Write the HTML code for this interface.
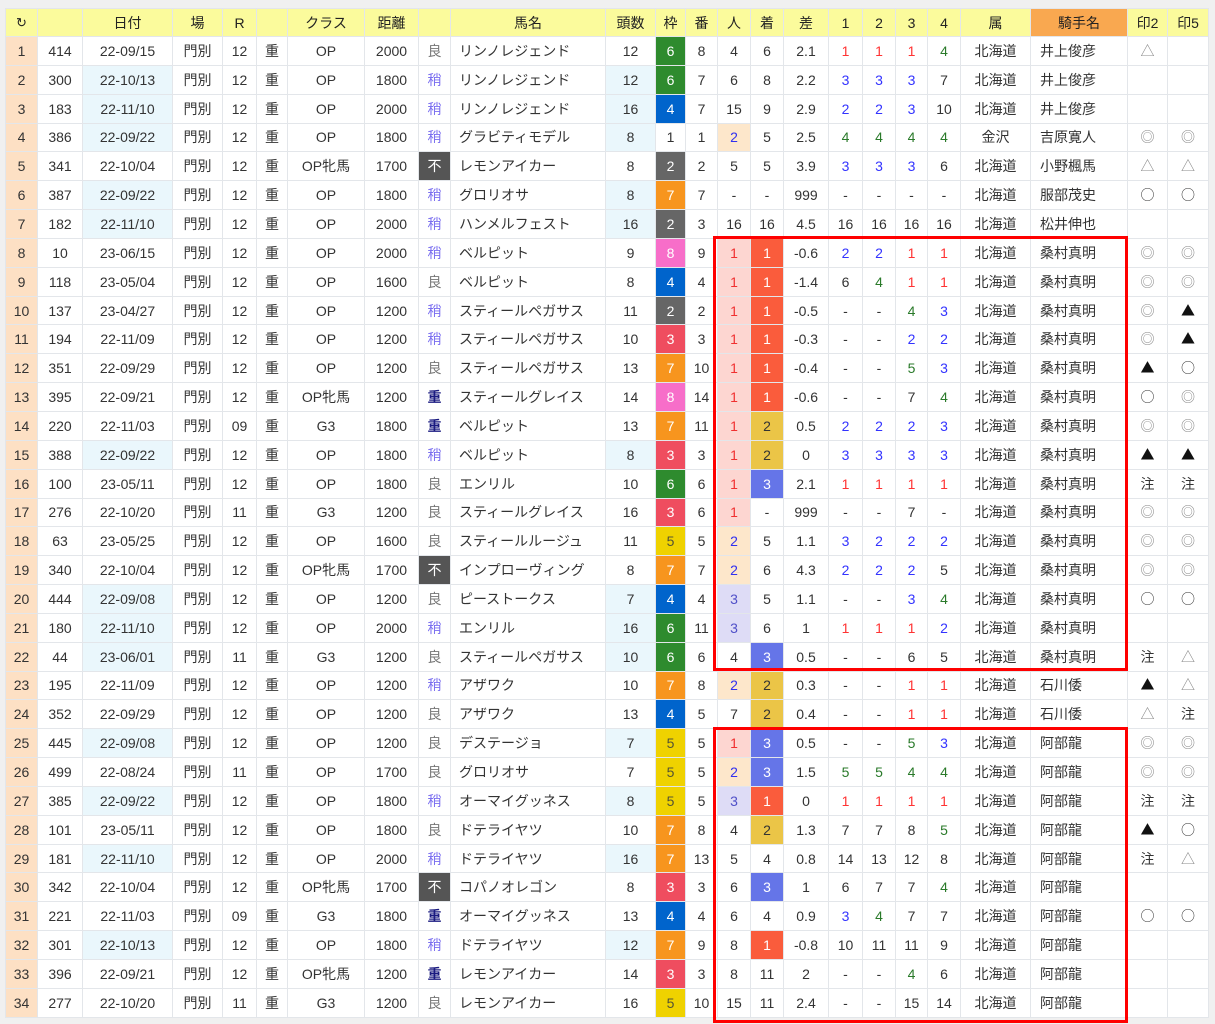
<!DOCTYPE html>
<html><head><meta charset="utf-8">
<style>
html,body{margin:0;padding:0;background:#f0f0f0;}
body{width:1215px;height:1024px;position:relative;overflow:hidden;font-family:"Liberation Sans","Noto Sans CJK JP",sans-serif;}
table{position:absolute;left:5px;top:8px;border-collapse:collapse;table-layout:fixed;width:1203px;font-size:14px;color:#333;background:#fff;}
td,th{border:1px solid #e3e6ea;text-align:center;padding:0;white-space:nowrap;overflow:hidden;line-height:16px;}
th{height:27px;background:#fbfb9c;font-weight:normal;color:#222;}
th.jh{background:#f9a850;}
tbody tr{height:28.85px;}
tbody td:nth-child(1){background:#fde0c4;}
tr.lb td:nth-child(3),tr.lb td:nth-child(11){background:#eaf7fc;}
td.nm{text-align:left;padding-left:8px;}
td.jk{text-align:left;padding-left:9px;}
.ry{color:#777}.y{color:#7a6ef0}.h{color:#1a1a80;font-weight:bold}.f{color:#fff;background:#555}
.w1{background:#fff}.w2{background:#666;color:#fff}.w3{background:#ef4d5f;color:#fff}.w4{background:#0064cc;color:#fff}
.w5{background:#efd200;color:#553}.w6{background:#2e8b2e;color:#fff}.w7{background:#f7951e;color:#fff}.w8{background:#f76ec9;color:#fff}
.p1{background:#fdd6d1;color:#f03030}.p2{background:#fde7cb;color:#3030f0}.p3{background:#dedcf6;color:#5050c8}
.a1{background:#fa5c3c;color:#fff}.a2{background:#ebc547;color:#333}.a3{background:#6575e8;color:#fff}
.r{color:#f33}.bl{color:#33f}.g{color:#2a7a2a}
.m,.k,.o{font-family:"Noto Sans CJK JP",sans-serif;font-size:14px}
.m{color:#888}.k{color:#111}.o{color:#333}.c{color:#333;font-size:14px}
.box{position:absolute;border:3px solid #f00;box-sizing:border-box;}
</style></head><body>
<table>
<colgroup><col style="width:32px"><col style="width:45px"><col style="width:90px"><col style="width:50px"><col style="width:34px"><col style="width:31px"><col style="width:77px"><col style="width:54px"><col style="width:32px"><col style="width:155px"><col style="width:50px"><col style="width:30px"><col style="width:32px"><col style="width:33px"><col style="width:33px"><col style="width:45px"><col style="width:34px"><col style="width:33px"><col style="width:32px"><col style="width:33px"><col style="width:70px"><col style="width:97px"><col style="width:40px"><col style="width:41px"></colgroup>
<thead><tr><th style="font-size:13px">↻</th><th></th><th>日付</th><th>場</th><th>R</th><th></th><th>クラス</th><th>距離</th><th></th><th>馬名</th><th>頭数</th><th>枠</th><th>番</th><th>人</th><th>着</th><th>差</th><th>1</th><th>2</th><th>3</th><th>4</th><th>属</th><th class="jh">騎手名</th><th>印2</th><th>印5</th></tr></thead>
<tbody>
<tr><td>1</td><td>414</td><td>22-09/15</td><td>門別</td><td>12</td><td>重</td><td>OP</td><td>2000</td><td class=ry>良</td><td class=nm>リンノレジェンド</td><td>12</td><td class=w6>6</td><td>8</td><td>4</td><td>6</td><td>2.1</td><td class=r>1</td><td class=r>1</td><td class=r>1</td><td class=g>4</td><td>北海道</td><td class=jk>井上俊彦</td><td class=m>△</td><td></td></tr>
<tr class=lb><td>2</td><td>300</td><td>22-10/13</td><td>門別</td><td>12</td><td>重</td><td>OP</td><td>1800</td><td class=y>稍</td><td class=nm>リンノレジェンド</td><td>12</td><td class=w6>6</td><td>7</td><td>6</td><td>8</td><td>2.2</td><td class=bl>3</td><td class=bl>3</td><td class=bl>3</td><td>7</td><td>北海道</td><td class=jk>井上俊彦</td><td></td><td></td></tr>
<tr class=lb><td>3</td><td>183</td><td>22-11/10</td><td>門別</td><td>12</td><td>重</td><td>OP</td><td>2000</td><td class=y>稍</td><td class=nm>リンノレジェンド</td><td>16</td><td class=w4>4</td><td>7</td><td>15</td><td>9</td><td>2.9</td><td class=bl>2</td><td class=bl>2</td><td class=bl>3</td><td>10</td><td>北海道</td><td class=jk>井上俊彦</td><td></td><td></td></tr>
<tr class=lb><td>4</td><td>386</td><td>22-09/22</td><td>門別</td><td>12</td><td>重</td><td>OP</td><td>1800</td><td class=y>稍</td><td class=nm>グラビティモデル</td><td>8</td><td class=w1>1</td><td>1</td><td class=p2>2</td><td>5</td><td>2.5</td><td class=g>4</td><td class=g>4</td><td class=g>4</td><td class=g>4</td><td>金沢</td><td class=jk>吉原寛人</td><td class=m>◎</td><td class=m>◎</td></tr>
<tr><td>5</td><td>341</td><td>22-10/04</td><td>門別</td><td>12</td><td>重</td><td>OP牝馬</td><td>1700</td><td class=f>不</td><td class=nm>レモンアイカー</td><td>8</td><td class=w2>2</td><td>2</td><td>5</td><td>5</td><td>3.9</td><td class=bl>3</td><td class=bl>3</td><td class=bl>3</td><td>6</td><td>北海道</td><td class=jk>小野楓馬</td><td class=m>△</td><td class=m>△</td></tr>
<tr class=lb><td>6</td><td>387</td><td>22-09/22</td><td>門別</td><td>12</td><td>重</td><td>OP</td><td>1800</td><td class=y>稍</td><td class=nm>グロリオサ</td><td>8</td><td class=w7>7</td><td>7</td><td>-</td><td>-</td><td>999</td><td>-</td><td>-</td><td>-</td><td>-</td><td>北海道</td><td class=jk>服部茂史</td><td class=o>○</td><td class=o>○</td></tr>
<tr class=lb><td>7</td><td>182</td><td>22-11/10</td><td>門別</td><td>12</td><td>重</td><td>OP</td><td>2000</td><td class=y>稍</td><td class=nm>ハンメルフェスト</td><td>16</td><td class=w2>2</td><td>3</td><td>16</td><td>16</td><td>4.5</td><td>16</td><td>16</td><td>16</td><td>16</td><td>北海道</td><td class=jk>松井伸也</td><td></td><td></td></tr>
<tr><td>8</td><td>10</td><td>23-06/15</td><td>門別</td><td>12</td><td>重</td><td>OP</td><td>2000</td><td class=y>稍</td><td class=nm>ベルピット</td><td>9</td><td class=w8>8</td><td>9</td><td class=p1>1</td><td class=a1>1</td><td>-0.6</td><td class=bl>2</td><td class=bl>2</td><td class=r>1</td><td class=r>1</td><td>北海道</td><td class=jk>桑村真明</td><td class=m>◎</td><td class=m>◎</td></tr>
<tr><td>9</td><td>118</td><td>23-05/04</td><td>門別</td><td>12</td><td>重</td><td>OP</td><td>1600</td><td class=ry>良</td><td class=nm>ベルピット</td><td>8</td><td class=w4>4</td><td>4</td><td class=p1>1</td><td class=a1>1</td><td>-1.4</td><td>6</td><td class=g>4</td><td class=r>1</td><td class=r>1</td><td>北海道</td><td class=jk>桑村真明</td><td class=m>◎</td><td class=m>◎</td></tr>
<tr><td>10</td><td>137</td><td>23-04/27</td><td>門別</td><td>12</td><td>重</td><td>OP</td><td>1200</td><td class=y>稍</td><td class=nm>スティールペガサス</td><td>11</td><td class=w2>2</td><td>2</td><td class=p1>1</td><td class=a1>1</td><td>-0.5</td><td>-</td><td>-</td><td class=g>4</td><td class=bl>3</td><td>北海道</td><td class=jk>桑村真明</td><td class=m>◎</td><td class=k>▲</td></tr>
<tr><td>11</td><td>194</td><td>22-11/09</td><td>門別</td><td>12</td><td>重</td><td>OP</td><td>1200</td><td class=y>稍</td><td class=nm>スティールペガサス</td><td>10</td><td class=w3>3</td><td>3</td><td class=p1>1</td><td class=a1>1</td><td>-0.3</td><td>-</td><td>-</td><td class=bl>2</td><td class=bl>2</td><td>北海道</td><td class=jk>桑村真明</td><td class=m>◎</td><td class=k>▲</td></tr>
<tr><td>12</td><td>351</td><td>22-09/29</td><td>門別</td><td>12</td><td>重</td><td>OP</td><td>1200</td><td class=ry>良</td><td class=nm>スティールペガサス</td><td>13</td><td class=w7>7</td><td>10</td><td class=p1>1</td><td class=a1>1</td><td>-0.4</td><td>-</td><td>-</td><td class=g>5</td><td class=bl>3</td><td>北海道</td><td class=jk>桑村真明</td><td class=k>▲</td><td class=o>○</td></tr>
<tr><td>13</td><td>395</td><td>22-09/21</td><td>門別</td><td>12</td><td>重</td><td>OP牝馬</td><td>1200</td><td class=h>重</td><td class=nm>スティールグレイス</td><td>14</td><td class=w8>8</td><td>14</td><td class=p1>1</td><td class=a1>1</td><td>-0.6</td><td>-</td><td>-</td><td>7</td><td class=g>4</td><td>北海道</td><td class=jk>桑村真明</td><td class=o>○</td><td class=m>◎</td></tr>
<tr><td>14</td><td>220</td><td>22-11/03</td><td>門別</td><td>09</td><td>重</td><td>G3</td><td>1800</td><td class=h>重</td><td class=nm>ベルピット</td><td>13</td><td class=w7>7</td><td>11</td><td class=p1>1</td><td class=a2>2</td><td>0.5</td><td class=bl>2</td><td class=bl>2</td><td class=bl>2</td><td class=bl>3</td><td>北海道</td><td class=jk>桑村真明</td><td class=m>◎</td><td class=m>◎</td></tr>
<tr class=lb><td>15</td><td>388</td><td>22-09/22</td><td>門別</td><td>12</td><td>重</td><td>OP</td><td>1800</td><td class=y>稍</td><td class=nm>ベルピット</td><td>8</td><td class=w3>3</td><td>3</td><td class=p1>1</td><td class=a2>2</td><td>0</td><td class=bl>3</td><td class=bl>3</td><td class=bl>3</td><td class=bl>3</td><td>北海道</td><td class=jk>桑村真明</td><td class=k>▲</td><td class=k>▲</td></tr>
<tr><td>16</td><td>100</td><td>23-05/11</td><td>門別</td><td>12</td><td>重</td><td>OP</td><td>1800</td><td class=ry>良</td><td class=nm>エンリル</td><td>10</td><td class=w6>6</td><td>6</td><td class=p1>1</td><td class=a3>3</td><td>2.1</td><td class=r>1</td><td class=r>1</td><td class=r>1</td><td class=r>1</td><td>北海道</td><td class=jk>桑村真明</td><td class=c>注</td><td class=c>注</td></tr>
<tr><td>17</td><td>276</td><td>22-10/20</td><td>門別</td><td>11</td><td>重</td><td>G3</td><td>1200</td><td class=ry>良</td><td class=nm>スティールグレイス</td><td>16</td><td class=w3>3</td><td>6</td><td class=p1>1</td><td>-</td><td>999</td><td>-</td><td>-</td><td>7</td><td>-</td><td>北海道</td><td class=jk>桑村真明</td><td class=m>◎</td><td class=m>◎</td></tr>
<tr><td>18</td><td>63</td><td>23-05/25</td><td>門別</td><td>12</td><td>重</td><td>OP</td><td>1600</td><td class=ry>良</td><td class=nm>スティールルージュ</td><td>11</td><td class=w5>5</td><td>5</td><td class=p2>2</td><td>5</td><td>1.1</td><td class=bl>3</td><td class=bl>2</td><td class=bl>2</td><td class=bl>2</td><td>北海道</td><td class=jk>桑村真明</td><td class=m>◎</td><td class=m>◎</td></tr>
<tr><td>19</td><td>340</td><td>22-10/04</td><td>門別</td><td>12</td><td>重</td><td>OP牝馬</td><td>1700</td><td class=f>不</td><td class=nm>インプローヴィング</td><td>8</td><td class=w7>7</td><td>7</td><td class=p2>2</td><td>6</td><td>4.3</td><td class=bl>2</td><td class=bl>2</td><td class=bl>2</td><td>5</td><td>北海道</td><td class=jk>桑村真明</td><td class=m>◎</td><td class=m>◎</td></tr>
<tr class=lb><td>20</td><td>444</td><td>22-09/08</td><td>門別</td><td>12</td><td>重</td><td>OP</td><td>1200</td><td class=ry>良</td><td class=nm>ピーストークス</td><td>7</td><td class=w4>4</td><td>4</td><td class=p3>3</td><td>5</td><td>1.1</td><td>-</td><td>-</td><td class=bl>3</td><td class=g>4</td><td>北海道</td><td class=jk>桑村真明</td><td class=o>○</td><td class=o>○</td></tr>
<tr class=lb><td>21</td><td>180</td><td>22-11/10</td><td>門別</td><td>12</td><td>重</td><td>OP</td><td>2000</td><td class=y>稍</td><td class=nm>エンリル</td><td>16</td><td class=w6>6</td><td>11</td><td class=p3>3</td><td>6</td><td>1</td><td class=r>1</td><td class=r>1</td><td class=r>1</td><td class=bl>2</td><td>北海道</td><td class=jk>桑村真明</td><td></td><td></td></tr>
<tr class=lb><td>22</td><td>44</td><td>23-06/01</td><td>門別</td><td>11</td><td>重</td><td>G3</td><td>1200</td><td class=ry>良</td><td class=nm>スティールペガサス</td><td>10</td><td class=w6>6</td><td>6</td><td>4</td><td class=a3>3</td><td>0.5</td><td>-</td><td>-</td><td>6</td><td>5</td><td>北海道</td><td class=jk>桑村真明</td><td class=c>注</td><td class=m>△</td></tr>
<tr><td>23</td><td>195</td><td>22-11/09</td><td>門別</td><td>12</td><td>重</td><td>OP</td><td>1200</td><td class=y>稍</td><td class=nm>アザワク</td><td>10</td><td class=w7>7</td><td>8</td><td class=p2>2</td><td class=a2>2</td><td>0.3</td><td>-</td><td>-</td><td class=r>1</td><td class=r>1</td><td>北海道</td><td class=jk>石川倭</td><td class=k>▲</td><td class=m>△</td></tr>
<tr><td>24</td><td>352</td><td>22-09/29</td><td>門別</td><td>12</td><td>重</td><td>OP</td><td>1200</td><td class=ry>良</td><td class=nm>アザワク</td><td>13</td><td class=w4>4</td><td>5</td><td>7</td><td class=a2>2</td><td>0.4</td><td>-</td><td>-</td><td class=r>1</td><td class=r>1</td><td>北海道</td><td class=jk>石川倭</td><td class=m>△</td><td class=c>注</td></tr>
<tr class=lb><td>25</td><td>445</td><td>22-09/08</td><td>門別</td><td>12</td><td>重</td><td>OP</td><td>1200</td><td class=ry>良</td><td class=nm>デステージョ</td><td>7</td><td class=w5>5</td><td>5</td><td class=p1>1</td><td class=a3>3</td><td>0.5</td><td>-</td><td>-</td><td class=g>5</td><td class=bl>3</td><td>北海道</td><td class=jk>阿部龍</td><td class=m>◎</td><td class=m>◎</td></tr>
<tr><td>26</td><td>499</td><td>22-08/24</td><td>門別</td><td>11</td><td>重</td><td>OP</td><td>1700</td><td class=ry>良</td><td class=nm>グロリオサ</td><td>7</td><td class=w5>5</td><td>5</td><td class=p2>2</td><td class=a3>3</td><td>1.5</td><td class=g>5</td><td class=g>5</td><td class=g>4</td><td class=g>4</td><td>北海道</td><td class=jk>阿部龍</td><td class=m>◎</td><td class=m>◎</td></tr>
<tr class=lb><td>27</td><td>385</td><td>22-09/22</td><td>門別</td><td>12</td><td>重</td><td>OP</td><td>1800</td><td class=y>稍</td><td class=nm>オーマイグッネス</td><td>8</td><td class=w5>5</td><td>5</td><td class=p3>3</td><td class=a1>1</td><td>0</td><td class=r>1</td><td class=r>1</td><td class=r>1</td><td class=r>1</td><td>北海道</td><td class=jk>阿部龍</td><td class=c>注</td><td class=c>注</td></tr>
<tr><td>28</td><td>101</td><td>23-05/11</td><td>門別</td><td>12</td><td>重</td><td>OP</td><td>1800</td><td class=ry>良</td><td class=nm>ドテライヤツ</td><td>10</td><td class=w7>7</td><td>8</td><td>4</td><td class=a2>2</td><td>1.3</td><td>7</td><td>7</td><td>8</td><td class=g>5</td><td>北海道</td><td class=jk>阿部龍</td><td class=k>▲</td><td class=o>○</td></tr>
<tr class=lb><td>29</td><td>181</td><td>22-11/10</td><td>門別</td><td>12</td><td>重</td><td>OP</td><td>2000</td><td class=y>稍</td><td class=nm>ドテライヤツ</td><td>16</td><td class=w7>7</td><td>13</td><td>5</td><td>4</td><td>0.8</td><td>14</td><td>13</td><td>12</td><td>8</td><td>北海道</td><td class=jk>阿部龍</td><td class=c>注</td><td class=m>△</td></tr>
<tr><td>30</td><td>342</td><td>22-10/04</td><td>門別</td><td>12</td><td>重</td><td>OP牝馬</td><td>1700</td><td class=f>不</td><td class=nm>コパノオレゴン</td><td>8</td><td class=w3>3</td><td>3</td><td>6</td><td class=a3>3</td><td>1</td><td>6</td><td>7</td><td>7</td><td class=g>4</td><td>北海道</td><td class=jk>阿部龍</td><td></td><td></td></tr>
<tr><td>31</td><td>221</td><td>22-11/03</td><td>門別</td><td>09</td><td>重</td><td>G3</td><td>1800</td><td class=h>重</td><td class=nm>オーマイグッネス</td><td>13</td><td class=w4>4</td><td>4</td><td>6</td><td>4</td><td>0.9</td><td class=bl>3</td><td class=g>4</td><td>7</td><td>7</td><td>北海道</td><td class=jk>阿部龍</td><td class=o>○</td><td class=o>○</td></tr>
<tr class=lb><td>32</td><td>301</td><td>22-10/13</td><td>門別</td><td>12</td><td>重</td><td>OP</td><td>1800</td><td class=y>稍</td><td class=nm>ドテライヤツ</td><td>12</td><td class=w7>7</td><td>9</td><td>8</td><td class=a1>1</td><td>-0.8</td><td>10</td><td>11</td><td>11</td><td>9</td><td>北海道</td><td class=jk>阿部龍</td><td></td><td></td></tr>
<tr><td>33</td><td>396</td><td>22-09/21</td><td>門別</td><td>12</td><td>重</td><td>OP牝馬</td><td>1200</td><td class=h>重</td><td class=nm>レモンアイカー</td><td>14</td><td class=w3>3</td><td>3</td><td>8</td><td>11</td><td>2</td><td>-</td><td>-</td><td class=g>4</td><td>6</td><td>北海道</td><td class=jk>阿部龍</td><td></td><td></td></tr>
<tr><td>34</td><td>277</td><td>22-10/20</td><td>門別</td><td>11</td><td>重</td><td>G3</td><td>1200</td><td class=ry>良</td><td class=nm>レモンアイカー</td><td>16</td><td class=w5>5</td><td>10</td><td>15</td><td>11</td><td>2.4</td><td>-</td><td>-</td><td>15</td><td>14</td><td>北海道</td><td class=jk>阿部龍</td><td></td><td></td></tr>
</tbody></table>
<div class="box" style="left:713px;top:236px;width:415px;height:435px"></div>
<div class="box" style="left:713px;top:727px;width:415px;height:296px"></div>
</body></html>
